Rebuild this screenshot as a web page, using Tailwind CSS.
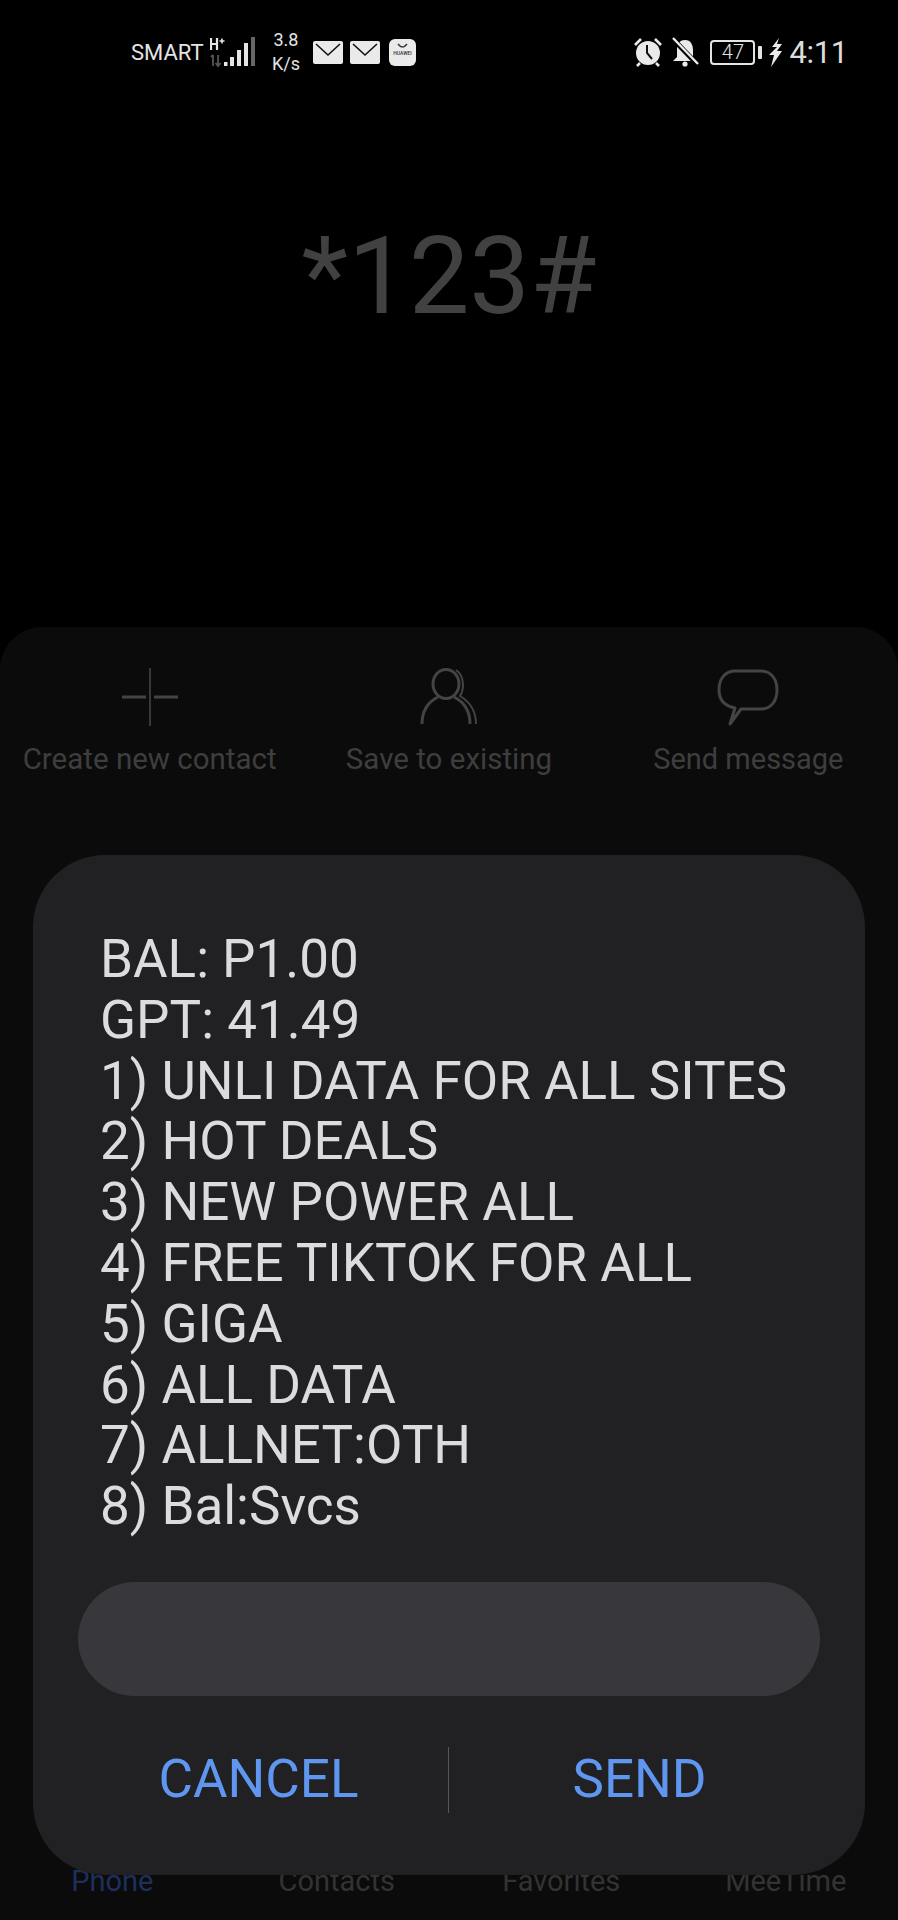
<!DOCTYPE html>
<html lang="en">
<head>
  <meta charset="UTF-8" />
  <title>USSD dialog</title>
  <script src="https://cdn.jsdelivr.net/npm/@tailwindcss/browser@4"></script>
</head>
<body class="bg-black font-['Roboto',sans-serif]">
  <div class="relative w-[898px] h-[1920px] overflow-hidden flex flex-col bg-black">

    <!-- Status bar -->
    <div class="h-[104px] shrink-0 pl-[131px] pr-[50px] flex items-center justify-between text-[#e4e4e4]">
      <div class="flex items-center">
        <span class="text-[22px] w-[79px]">SMART</span>
        <svg class="w-[46px] h-[32px]" viewBox="0 0 46 32">
          <path d="M1 2 V14 M7 2 V14 M1 8 H7" stroke="#e4e4e4" stroke-width="2.2" fill="none" />
          <path d="M9.5 5 H14.5 M12 2.5 V7.5" stroke="#e4e4e4" stroke-width="1.6" fill="none" />
          <path d="M3 19 V30 M1 21 L3 19 M8 19 V30 M5.5 27 L8 30 L10.5 27" stroke="#555" stroke-width="1.8" fill="none" />
          <rect x="14" y="26" width="3.5" height="4" fill="#e4e4e4" />
          <rect x="20" y="21" width="4" height="9" fill="#e4e4e4" />
          <rect x="27" y="14" width="4" height="16" fill="#e4e4e4" />
          <rect x="34" y="7" width="4" height="23" fill="#e4e4e4" />
          <rect x="41" y="1" width="4" height="29" fill="#666" />
        </svg>
        <div class="ml-[13px] w-[34px] text-[18px] leading-[24px] text-center">3.8<br />K/s</div>
        <svg class="ml-[10px] w-[30px] h-[23px]" viewBox="0 0 30 23">
          <rect width="30" height="23" rx="2" fill="#eaeaea" />
          <path d="M3 3 L15 14 L27 3" fill="none" stroke="#111" stroke-width="1.6" />
        </svg>
        <svg class="ml-[7px] w-[30px] h-[23px]" viewBox="0 0 30 23">
          <rect width="30" height="23" rx="2" fill="#eaeaea" />
          <path d="M3 3 L15 14 L27 3" fill="none" stroke="#111" stroke-width="1.6" />
        </svg>
        <svg class="ml-[9px] w-[27px] h-[27px]" viewBox="0 0 27 27">
          <rect width="27" height="27" rx="6" fill="#eaeaea" />
          <path d="M9 5 Q13.5 11 18 5" fill="none" stroke="#333" stroke-width="1.4" />
          <text x="13.5" y="16" font-size="5" text-anchor="middle" fill="#333" font-family="Roboto" font-weight="500">HUAWEI</text>
        </svg>
      </div>
      <div class="flex items-center">
        <!-- alarm -->
        <svg class="w-[30px] h-[30px]" viewBox="0 0 30 30">
          <circle cx="15" cy="16" r="12" fill="#eaeaea" />
          <path d="M14 8 V16 L19 22" fill="none" stroke="#111" stroke-width="2" />
          <path d="M2 8 L8 2 M28 8 L22 2 M7 26 L4 29 M23 26 L26 29" stroke="#eaeaea" stroke-width="2.6" />
        </svg>
        <!-- muted bell -->
        <svg class="ml-[8px] w-[28px] h-[30px]" viewBox="0 0 28 30">
          <path d="M14 3 C8 3 6 8 6 13 V20 L2 24 H26 L22 20 V13 C22 8 20 3 14 3 Z" fill="#eaeaea" />
          <circle cx="14" cy="27" r="2.6" fill="#eaeaea" />
          <path d="M1 1 L27 28" stroke="#000" stroke-width="5" />
          <path d="M2 1 L27 27" stroke="#eaeaea" stroke-width="2.4" />
        </svg>
        <!-- battery -->
        <div class="ml-[11px] w-[45px] h-[25px] border-2 border-[#e4e4e4] rounded-[4px] flex items-center justify-center text-[20px] leading-none font-light">47</div>
        <div class="ml-[3px] w-[4px] h-[13px] bg-[#e4e4e4] rounded-[1px]"></div>
        <svg class="ml-[6px] w-[15px] h-[29px]" viewBox="0 0 15 29">
          <path d="M11 0 L4 9 L9 9 L1 17 L6 17 L3 29 L14 13 L9 13 L14 6 L9 6 Z" fill="#eaeaea" />
        </svg>
        <span class="ml-[6px] text-[31px] leading-none tracking-[-0.3px] text-[#dcdcdc]">4:11</span>
      </div>
    </div>

    <!-- Dialed code -->
    <div class="h-[523px] shrink-0 pt-[110px] flex justify-center">
      <span class="text-[108px] leading-[125px] text-[#414141]">*123#</span>
    </div>

    <!-- Bottom sheet -->
    <div class="flex-1 rounded-t-[42px] bg-[#0b0b0c] flex flex-col justify-between">
      <div class="pt-[41px] grid grid-cols-3 text-[#3e3e3e]">
        <div class="flex flex-col items-center">
          <svg class="w-[58px] h-[58px]" viewBox="0 0 58 58">
            <path d="M29 0 V58" stroke="#444" stroke-width="1.6" />
            <path d="M1 29 H25 M33 29 H57" stroke="#444" stroke-width="3" />
          </svg>
          <span class="mt-[15px] text-[29.5px] leading-[36px]">Create new contact</span>
        </div>
        <div class="flex flex-col items-center">
          <svg class="w-[58px] h-[58px]" viewBox="0 0 58 58">
            <ellipse cx="26" cy="16" rx="13" ry="14.5" fill="none" stroke="#444" stroke-width="3" />
            <path d="M2 56 C2 43 8 34 18 29 M34 29 C44 34 50 43 50 56" fill="none" stroke="#444" stroke-width="3" />
            <path d="M36 2 C45 8 44 22 40 28 C50 34 56 44 56 56" fill="none" stroke="#444" stroke-width="2" />
          </svg>
          <span class="mt-[15px] text-[29.5px] leading-[36px]">Save to existing</span>
        </div>
        <div class="flex flex-col items-center">
          <svg class="w-[62px] h-[58px]" viewBox="0 0 62 58">
            <path d="M18 3 H44 C54 3 60 11 60 22 C60 33 54 41 44 41 H24 L13 56 L18 40 C8 38 2 32 2 22 C2 11 8 3 18 3 Z" fill="none" stroke="#444" stroke-width="3" stroke-linejoin="round" />
          </svg>
          <span class="mt-[15px] text-[29px] leading-[36px]">Send message</span>
        </div>
      </div>

      <div class="pb-[21px] grid grid-cols-4 text-[29px] leading-[36px] text-center text-[#333]">
        <span class="text-[#1e2f5c]">Phone</span>
        <span>Contacts</span>
        <span>Favorites</span>
        <span>MeeTime</span>
      </div>
    </div>

    <!-- USSD dialog -->
    <div class="absolute left-[33px] top-[855px] w-[832px] h-[1020px] rounded-[72px] bg-[#212124] pt-[74px] flex flex-col">
      <div class="pl-[67px] text-[53px] leading-[60.8px] font-normal text-[#dcdcde]">
        <p>BAL: P1.00</p>
        <p>GPT: 41.49</p>
        <p>1) UNLI DATA FOR ALL SITES</p>
        <p>2) HOT DEALS</p>
        <p>3) NEW POWER ALL</p>
        <p>4) FREE TIKTOK FOR ALL</p>
        <p>5) GIGA</p>
        <p>6) ALL DATA</p>
        <p>7) ALLNET:OTH</p>
        <p>8) Bal:Svcs</p>
      </div>
      <div class="mt-[45px] mx-[45px] h-[114px] rounded-[57px] bg-[#38383c]"></div>
      <div class="mt-[50px] flex items-center h-[68px] text-[53px] leading-none text-[#5e96f0]">
        <div class="w-[415px] text-center pl-[36px]">CANCEL</div>
        <div class="w-px h-[66px] bg-[#55555a]"></div>
        <div class="flex-1 text-center pr-[35px]">SEND</div>
      </div>
    </div>
  </div>
</body>
</html>
